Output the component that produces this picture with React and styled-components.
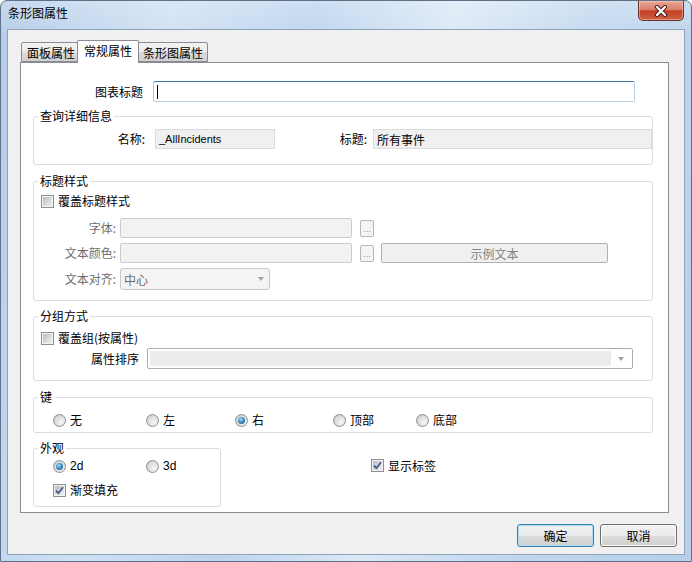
import React from 'react';
import styled, { createGlobalStyle } from 'styled-components';

const GlobalStyle = createGlobalStyle`
  html, body { margin: 0; padding: 0; background: #fff; }
  body {
    font-family: "Noto Sans CJK SC", "Liberation Sans", sans-serif;
    font-size: 12px;
    color: #000;
  }
  * { box-sizing: border-box; }
`;

const Window = styled.div`
  width: 692px;
  height: 562px;
  display: flex;
  flex-direction: column;
  border: 1px solid #5f7189;
  border-radius: 7px 7px 0 0;
  overflow: hidden;
  background:
    linear-gradient(180deg, rgba(255,255,255,0.25) 0%, rgba(255,255,255,0) 40px),
    linear-gradient(100deg, #b3cce8 0%, #cfe0f3 22%, #bdd4ee 40%, #dbe8f6 58%, #c3d8ef 75%, #b6cfea 100%);
`;

const TitleBar = styled.div`
  height: 28px;
  flex: none;
  display: flex;
  align-items: flex-start;
`;

const TitleText = styled.div`
  padding: 4px 0 0 7px;
  line-height: 16px;
  font-size: 12px;
  color: #000;
`;

const CloseButton = styled.div`
  margin-left: auto;
  margin-right: 7px;
  width: 46px;
  height: 20px;
  border: 1px solid #6a3229;
  border-top: none;
  border-radius: 0 0 5px 5px;
  background: linear-gradient(180deg, #e9a797 0%, #d9806b 45%, #c43f24 52%, #cc6142 100%);
  box-shadow: inset 0 0 0 1px rgba(255, 220, 210, 0.45);
  display: flex;
  align-items: center;
  justify-content: center;
`;

const Client = styled.div`
  flex: 1;
  margin: 0 6px 6px 6px;
  border: 1px solid #8fa3bb;
  background: #f0f0f0;
  padding: 10px 7px 7px 12px;
  display: flex;
  flex-direction: column;
`;

const TabStrip = styled.div`
  height: 22px;
  flex: none;
  display: flex;
  align-items: flex-end;
  padding-left: 1px;
`;

const Tab = styled.div`
  position: relative;
  height: ${p => (p.$active ? 23 : 20)}px;
  margin: ${p => (p.$active ? '0 -2px -1px -2px' : '0 -1px 0 0')};
  padding: ${p => (p.$active ? '1px 6px 0' : '1px 4px 0 5px')};
  z-index: ${p => (p.$active ? 2 : 1)};
  border: 1px solid #898c95;
  border-bottom: ${p => (p.$active ? 'none' : '1px solid #898c95')};
  border-radius: 2px 2px 0 0;
  background: ${p => (p.$active ? '#fff' : 'linear-gradient(180deg, #f3f3f3 0%, #ebebeb 50%, #dddddd 51%, #cfcfcf 100%)')};
  line-height: 18px;
  font-size: 12px;
  white-space: nowrap;
`;

const Panel = styled.div`
  flex: 1;
  margin-right: 8px;
  background: #fff;
  border: 1px solid #898c95;
  padding: 0 15px 0 12px;
  display: flex;
  flex-direction: column;
`;

const TitleRow = styled.div`
  margin-top: 18px;
  display: flex;
  align-items: center;
  padding-right: 18px;
`;

const Label = styled.span`
  flex: none;
  width: ${p => p.$w}px;
  margin-right: ${p => p.$mr || 0}px;
  text-align: right;
  line-height: 16px;
  white-space: nowrap;
  color: ${p => (p.$disabled ? '#6d6d6d' : '#000')};
`;

const TextBox = styled.div`
  flex: 1;
  height: 21px;
  border: 1px solid;
  border-color: #3d7bad #b5cfe7 #b5cfe7 #a4c9e3;
  border-radius: 2px;
  display: flex;
  align-items: center;
  padding-left: 3px;
`;

const Caret = styled.span`
  width: 1px;
  height: 14px;
  background: #000;
`;

const Group = styled.fieldset`
  margin: ${p => p.$mt || 0}px 0 0 0;
  padding: ${p => p.$pt}px 0 ${p => p.$pb}px 0;
  border: 1px solid #d5dfe5;
  border-radius: 3px;
  min-width: 0;
  width: ${p => (p.$w ? `${p.$w}px` : 'auto')};
  flex: none;
`;

const Legend = styled.legend`
  margin-left: 4px;
  padding: 0 2px;
  line-height: 14px;
  font-size: 12px;
  color: #000;
`;

const Row = styled.div`
  display: flex;
  align-items: center;
  height: ${p => p.$h || 16}px;
  margin-top: ${p => p.$mt || 0}px;
  padding-left: ${p => p.$pl || 0}px;
`;

const ReadOnlyBox = styled.div`
  ${p => (p.$w ? `width: ${p.$w}px; flex: none;` : 'flex: 1;')}
  height: 20px;
  background: #f0f0f0;
  border: 1px solid #dcdcdc;
  display: flex;
  align-items: center;
  padding-left: 3px;
  font-family: ${p => (p.$latin ? '"Liberation Sans", sans-serif' : 'inherit')};
  font-size: ${p => (p.$latin ? 11 : 12)}px;
  white-space: nowrap;
`;

const DisabledBox = styled.div`
  width: 232px;
  height: 20px;
  flex: none;
  background: #f2f2f2;
  border: 1px solid #c9cbcd;
  border-radius: 2px;
`;

const DotsButton = styled.div`
  width: 14px;
  height: 17px;
  flex: none;
  margin-left: 8px;
  border: 1px solid #b4b6b8;
  border-radius: 2px;
  background: #f4f4f4;
  color: #8a8a8a;
  font-family: "Liberation Sans", sans-serif;
  font-size: 9px;
  line-height: 9px;
  display: flex;
  align-items: flex-end;
  justify-content: center;
  padding-bottom: 2px;
`;

const SampleButton = styled.div`
  width: 227px;
  height: 20px;
  flex: none;
  margin-left: 7px;
  border: 1px solid #adb2b5;
  border-radius: 2px;
  background: #f0f0f0;
  color: #838383;
  display: flex;
  align-items: center;
  justify-content: center;
`;

const DisabledSelect = styled.div`
  width: 150px;
  height: 22px;
  flex: none;
  border: 1px solid #c5c7c9;
  border-radius: 3px;
  background: #f4f4f4;
  color: #6d6d6d;
  display: flex;
  align-items: center;
  padding: 0 5px 0 3px;
`;

const Arrow = styled.span`
  margin-left: auto;
  width: 0;
  height: 0;
  border-left: 3.5px solid transparent;
  border-right: 3.5px solid transparent;
  border-top: 4px solid #a2a2a2;
`;

const Combo = styled.div`
  width: 486px;
  height: 21px;
  flex: none;
  border: 1px solid #abadb3;
  border-radius: 2px;
  background: #fff;
  padding: 2px;
  display: flex;
`;

const ComboField = styled.div`
  flex: 1;
  background: #ececec;
`;

const ComboArrow = styled.div`
  width: 19px;
  display: flex;
  align-items: center;
  justify-content: center;
  & > span { margin-left: 0; }
`;

const Choice = styled.label`
  display: inline-flex;
  align-items: center;
  height: 16px;
  gap: 4px;
  flex: none;
  width: ${p => (p.$w ? `${p.$w}px` : 'auto')};
  white-space: nowrap;
  font-family: ${p => (p.$latin ? '"Liberation Sans", sans-serif' : 'inherit')};
  font-size: 12px;
  line-height: 16px;
`;

const CheckOuter = styled.span`
  width: 13px;
  height: 13px;
  flex: none;
  border: 1px solid #8e8f8f;
  background: #f4f4f4;
  padding: 1px;
  display: flex;
`;

const CheckInner = styled.span`
  flex: 1;
  background: linear-gradient(135deg, #b7bbc0 0%, #dcdedf 60%, #eeeeef 100%);
  display: flex;
  align-items: center;
  justify-content: center;
`;

const RadioOuter = styled.span`
  width: 13px;
  height: 13px;
  flex: none;
  border-radius: 50%;
  border: 1px solid #8e8f8f;
  background: radial-gradient(circle at 65% 65%, #f6f6f6 0%, #dcdddf 55%, #b9bcc0 100%);
  display: flex;
  align-items: center;
  justify-content: center;
`;

const RadioDot = styled.span`
  width: 7px;
  height: 7px;
  border-radius: 50%;
  background: radial-gradient(circle at 40% 35%, #a6e1fb 0%, #3f8fc4 45%, #15507f 100%);
`;

const BottomRow = styled.div`
  margin-top: 8px;
  display: flex;
  align-items: flex-start;
`;

const ShowLabel = styled.div`
  margin: 15px 0 0 150px;
`;

const ButtonRow = styled.div`
  margin-top: 11px;
  display: flex;
  justify-content: flex-end;
  gap: 6px;
`;

const Button = styled.div`
  width: 77px;
  height: 23px;
  border: 1px solid ${p => (p.$default ? '#3c7fb1' : '#707070')};
  border-radius: 3px;
  background: linear-gradient(180deg, #f2f2f2 0%, #ebebeb 50%, #dddddd 51%, #cfcfcf 100%);
  box-shadow: inset 0 0 0 1px ${p => (p.$default ? '#a9dcf5' : '#fbfbfb')};
  display: flex;
  align-items: center;
  justify-content: center;
  font-size: 12px;
`;

const CheckMark = () => (
  <svg width="9" height="9" viewBox="0 0 9 9">
    <path d="M1 4.6 L3.4 7.2 L8 1.2" fill="none" stroke="#3c5585" strokeWidth="1.7" />
  </svg>
);

const Checkbox = ({ checked, children, w }) => (
  <Choice $w={w}>
    <CheckOuter>
      <CheckInner>{checked && <CheckMark />}</CheckInner>
    </CheckOuter>
    {children}
  </Choice>
);

const Radio = ({ checked, children, w, latin }) => (
  <Choice $w={w} $latin={latin}>
    <RadioOuter>{checked && <RadioDot />}</RadioOuter>
    {children}
  </Choice>
);

const CloseX = () => (
  <svg width="14" height="12" viewBox="0 0 14 12">
    <path d="M3 2 L11 10 M11 2 L3 10" stroke="#4a2119" strokeWidth="4.2" strokeLinecap="round" />
    <path d="M3 2 L11 10 M11 2 L3 10" stroke="#ffffff" strokeWidth="2.2" strokeLinecap="round" />
  </svg>
);

const keyOptions = [
  { label: '无', w: 93 },
  { label: '左', w: 89 },
  { label: '右', w: 98, checked: true },
  { label: '顶部', w: 83 },
  { label: '底部' },
];

export default function App() {
  return (
    <>
      <GlobalStyle />
      <Window>
        <TitleBar>
          <TitleText>条形图属性</TitleText>
          <CloseButton><CloseX /></CloseButton>
        </TitleBar>
        <Client>
          <TabStrip>
            <Tab>面板属性</Tab>
            <Tab $active>常规属性</Tab>
            <Tab>条形图属性</Tab>
          </TabStrip>
          <Panel>
            <TitleRow>
              <Label $w={110} $mr={10}>图表标题</Label>
              <TextBox><Caret /></TextBox>
            </TitleRow>

            <Group $mt={7} $pt={6} $pb={15}>
              <Legend>查询详细信息</Legend>
              <Row $h={20}>
                <Label $w={111} $mr={10}>名称:</Label>
                <ReadOnlyBox $w={120} $latin>_AllIncidents</ReadOnlyBox>
                <Label $w={92} $mr={6}>标题:</Label>
                <ReadOnlyBox>所有事件</ReadOnlyBox>
              </Row>
            </Group>

            <Group $mt={9} $pt={5} $pb={10}>
              <Legend>标题样式</Legend>
              <Row $pl={7}>
                <Checkbox>覆盖标题样式</Checkbox>
              </Row>
              <Row $h={20} $mt={9}>
                <Label $w={82} $mr={4} $disabled>字体:</Label>
                <DisabledBox />
                <DotsButton>...</DotsButton>
              </Row>
              <Row $h={20} $mt={5}>
                <Label $w={82} $mr={4} $disabled>文本颜色:</Label>
                <DisabledBox />
                <DotsButton>...</DotsButton>
                <SampleButton>示例文本</SampleButton>
              </Row>
              <Row $h={22} $mt={5}>
                <Label $w={82} $mr={4} $disabled>文本对齐:</Label>
                <DisabledSelect>
                  中心
                  <Arrow />
                </DisabledSelect>
              </Row>
            </Group>

            <Group $mt={8} $pt={7} $pb={11}>
              <Legend>分组方式</Legend>
              <Row $pl={7}>
                <Checkbox>覆盖组(按属性)</Checkbox>
              </Row>
              <Row $h={21} $mt={2}>
                <Label $w={105} $mr={8}>属性排序</Label>
                <Combo>
                  <ComboField />
                  <ComboArrow><Arrow /></ComboArrow>
                </Combo>
              </Row>
            </Group>

            <Group $mt={9} $pt={8} $pb={4}>
              <Legend>键</Legend>
              <Row $pl={19}>
                {keyOptions.map(o => (
                  <Radio key={o.label} w={o.w} checked={o.checked}>{o.label}</Radio>
                ))}
              </Row>
            </Group>

            <BottomRow>
              <Group $w={188} $pt={3} $pb={8}>
                <Legend>外观</Legend>
                <Row $pl={19}>
                  <Radio w={93} checked latin>2d</Radio>
                  <Radio latin>3d</Radio>
                </Row>
                <Row $pl={19} $mt={8}>
                  <Checkbox checked>渐变填充</Checkbox>
                </Row>
              </Group>
              <ShowLabel>
                <Checkbox checked>显示标签</Checkbox>
              </ShowLabel>
            </BottomRow>
          </Panel>
          <ButtonRow>
            <Button $default>确定</Button>
            <Button>取消</Button>
          </ButtonRow>
        </Client>
      </Window>
    </>
  );
}
